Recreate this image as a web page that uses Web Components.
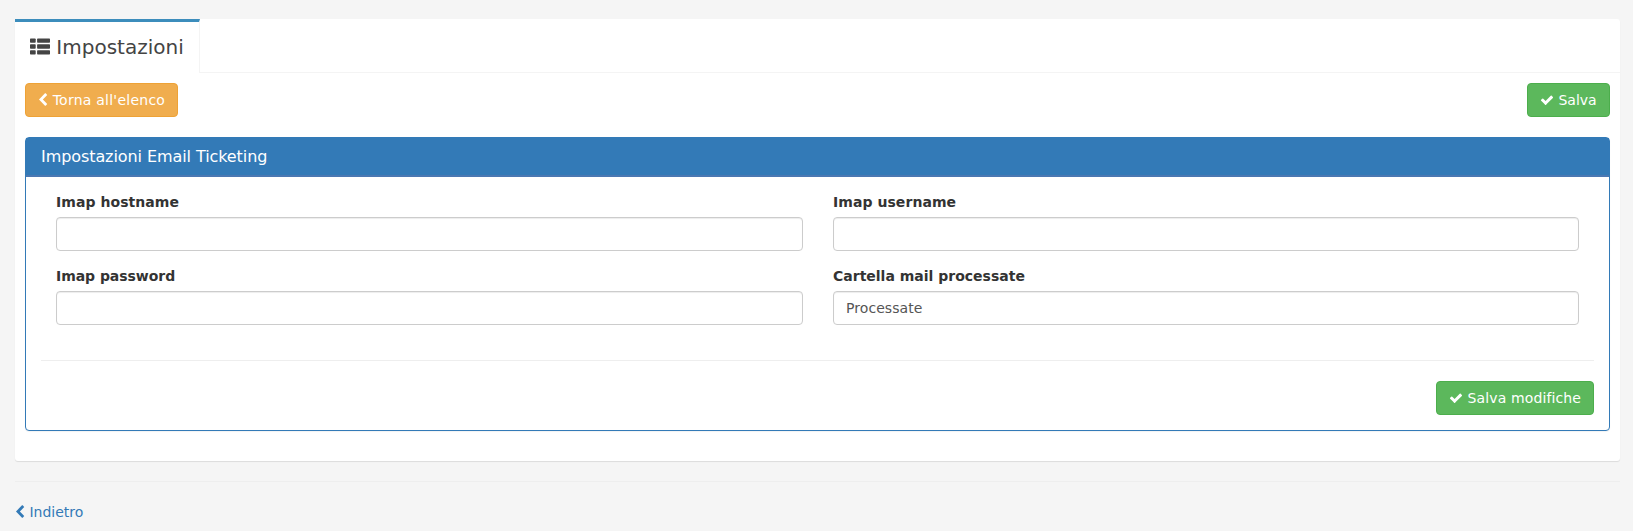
<!DOCTYPE html>
<html lang="it">
<head>
<meta charset="utf-8">
<title>Impostazioni</title>
<style>
html,body{margin:0;height:100%;background:#f5f5f5}
body{overflow:hidden;font:14px/20px "DejaVu Sans",sans-serif;color:#333}
</style>
</head>
<body>
<settings-page></settings-page>
<script>
const define = (name, html) => customElements.define(name, class extends HTMLElement {
  constructor() {
    super();
    const t = document.createElement('template');
    t.innerHTML = html;
    this.attachShadow({ mode: 'open' }).append(t.content.cloneNode(true));
  }
});

const ICONS = {
  list: ['0 0 20 20', 20, 20, '<rect y="2.5" width="5.7" height="4.3" rx=".7"/><rect x="7.1" y="2.5" width="12.9" height="4.3" rx=".7"/><rect y="8.2" width="5.7" height="4.5" rx=".7"/><rect x="7.1" y="8.2" width="12.9" height="4.5" rx=".7"/><rect y="14.2" width="5.7" height="4.3" rx=".7"/><rect x="7.1" y="14.2" width="12.9" height="4.3" rx=".7"/>'],
  back: ['275 0 1280 1792', 10, 14, '<path d="M1427 301l-531 531 531 531q19 19 19 45t-19 45l-166 166q-19 19-45 19t-45-19l-742-742q-19-19-19-45t19-45l742-742q19-19 45-19t45 19l166 166q19 19 19 45t-19 45z"/>'],
  check: ['0 0 1792 1792', 14, 14, '<path d="M1671 566q0 40-28 68l-724 724-136 136q-28 28-68 28t-68-28l-136-136-362-362q-28-28-28-68t28-68l136-136q28-28 68-28t68 28l294 295 656-657q28-28 68-28t68 28l136 136q28 28 28 68z"/>']
};
customElements.define('ui-icon', class extends HTMLElement {
  connectedCallback() {
    if (this.shadowRoot) return;
    const [box, w, h, body] = ICONS[this.getAttribute('name')];
    this.attachShadow({ mode: 'open' }).innerHTML =
      `<style>:host{display:inline-block;width:${w}px;height:${h}px;line-height:0;vertical-align:-2px}svg{display:block;fill:currentColor}</style>
       <svg viewBox="${box}" width="${w}" height="${h}">${body}</svg>`;
  }
});

define('ui-button', `<style>
:host{display:inline-block;--bg:#5cb85c;--line:#4cae4c}
:host([kind=warning]){--bg:#f0ad4e;--line:#eea236}
button{display:block;box-sizing:border-box;width:100%;height:34px;margin:0;padding:6px 12px;border:1px solid var(--line);border-radius:4px;background:var(--bg);color:#fff;font:inherit;letter-spacing:inherit;text-align:left;white-space:nowrap}
</style><button type="button"><slot></slot></button>`);

define('ui-rule', `<style>:host{display:block;height:1px;background:#eee}</style>`);

customElements.define('ui-field', class extends HTMLElement {
  connectedCallback() {
    if (this.shadowRoot) return;
    this.attachShadow({ mode: 'open' }).innerHTML = `<style>
:host{display:block;min-width:0}
label{display:block;margin-bottom:5px;font-weight:700}
input{display:block;box-sizing:border-box;width:100%;height:34px;margin:0;padding:6px 12px;border:1px solid #ccc;border-radius:4px;background:#fff;box-shadow:inset 0 1px 1px rgba(0,0,0,.075);color:#555;font:inherit;letter-spacing:.06px}
</style><label for="f"><slot></slot></label><input id="f" type="text">`;
    this.shadowRoot.querySelector('input').value = this.getAttribute('value') || '';
  }
});

define('ui-panel', `<style>
:host{display:block;box-sizing:border-box;border:1px solid #337ab7;border-radius:4px;background:#fff;box-shadow:0 1px 1px rgba(0,0,0,.05)}
header{box-sizing:border-box;height:39px;padding:10px 15px;border-bottom:2px solid #4b78b2;background:#337ab7;color:#fff;font-size:16px;line-height:18px;letter-spacing:-.08px}
section{padding:15px}
</style><header><slot name="title"></slot></header><section><slot></slot></section>`);

define('ui-tabs', `<style>
:host{display:block;background:#fff;border-radius:3px;box-shadow:0 1px 1px rgba(0,0,0,.1)}
nav{display:flex;height:54px}
.tab{box-sizing:border-box;width:185px;padding:11px 15px 0;border-top:3px solid #3c8dbc;border-right:1px solid #f4f4f4;color:#444;font-size:20px;line-height:28px;white-space:nowrap}
.rest{flex:1;box-sizing:border-box;border-bottom:1px solid #f4f4f4}
.body{padding:10px 10px 30px}
</style><nav><div class="tab"><slot name="tab"></slot></div><div class="rest"></div></nav><div class="body"><slot></slot></div>`);

define('settings-page', `<style>
:host{display:block;padding:19px 13px 0 15px}
.bar{display:flex;justify-content:space-between;margin-bottom:20px}
.back{width:153px;letter-spacing:.24px}
.save{width:83px}
.apply{width:158px;letter-spacing:.12px}
.grid{display:grid;grid-template-columns:747px 1fr;gap:15px 30px;padding:0 15px;margin-bottom:35px}
.end{display:flex;justify-content:flex-end;margin-top:20px}
.wide{letter-spacing:.06px}
.tight{letter-spacing:-.05px}
.outer{margin:20px 0}
a{color:#337ab7;text-decoration:none}
</style>
<ui-tabs>
  <span slot="tab"><ui-icon name="list"></ui-icon> Impostazioni</span>
  <div class="bar">
    <ui-button class="back" kind="warning"><ui-icon name="back"></ui-icon> Torna all'elenco</ui-button>
    <ui-button class="save"><ui-icon name="check"></ui-icon> Salva</ui-button>
  </div>
  <ui-panel>
    <span slot="title">Impostazioni Email Ticketing</span>
    <div class="grid">
      <ui-field class="wide">Imap hostname</ui-field>
      <ui-field class="wide">Imap username</ui-field>
      <ui-field class="tight">Imap password</ui-field>
      <ui-field value="Processate">Cartella mail processate</ui-field>
    </div>
    <ui-rule></ui-rule>
    <div class="end"><ui-button class="apply"><ui-icon name="check"></ui-icon> Salva modifiche</ui-button></div>
  </ui-panel>
</ui-tabs>
<ui-rule class="outer"></ui-rule>
<a><ui-icon name="back"></ui-icon> Indietro</a>`);
</script>
</body>
</html>
